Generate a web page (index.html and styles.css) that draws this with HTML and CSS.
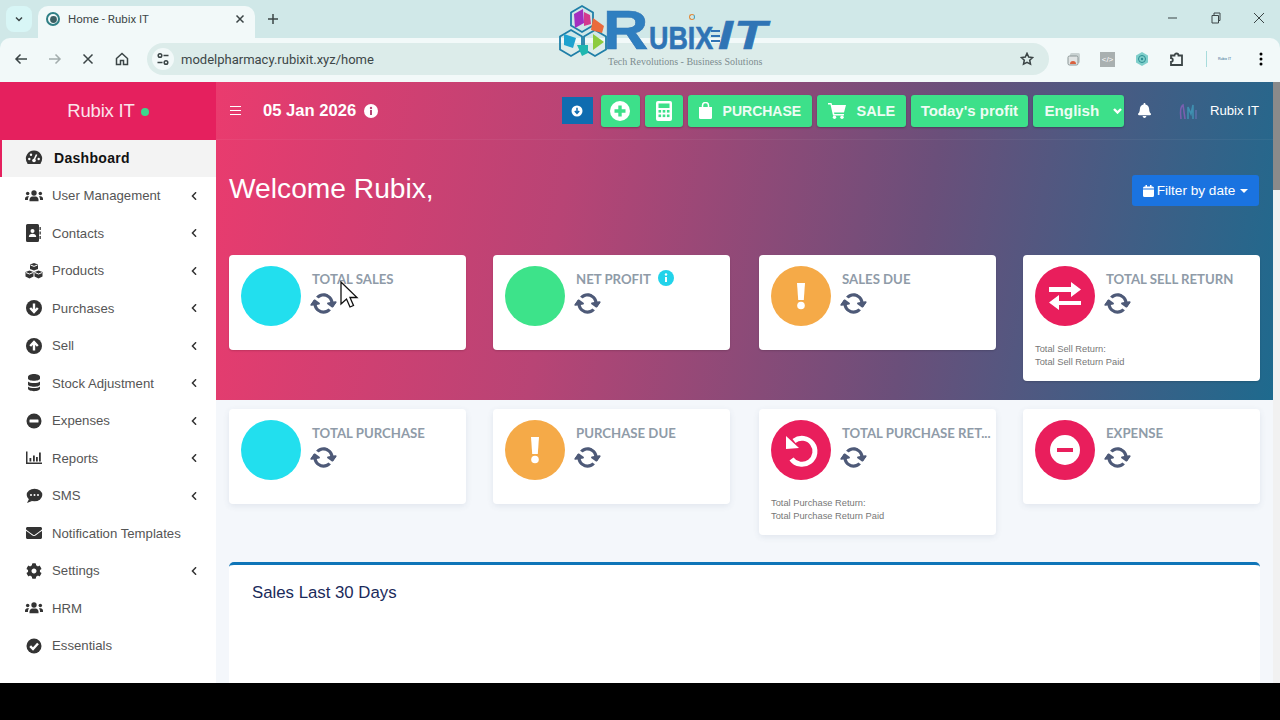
FILE: index.html
```html
<!DOCTYPE html>
<html lang="en">
<head>
  <meta charset="UTF-8">
  <title>Home - Rubix IT</title>
  <link rel="stylesheet" href="styles.css">
</head>

<body>
  <svg class="defs" width="0" height="0">
    <symbol id="i-sync" viewBox="0 0 512 512"><path d="M370.72 133.28C339.458 104.008 298.888 87.962 255.848 88c-77.458.068-144.328 53.178-162.791 126.85-1.344 5.363-6.122 9.15-11.651 9.15H24.103c-7.498 0-13.194-6.807-11.807-14.176C33.933 94.924 134.813 8 256 8c66.448 0 126.791 26.136 171.315 68.685L463.03 40.97C478.149 25.851 504 36.559 504 57.941V192c0 13.255-10.745 24-24 24H345.941c-21.382 0-32.09-25.851-16.971-40.971l41.75-41.749zM32 296h134.059c21.382 0 32.09 25.851 16.971 40.971l-41.75 41.75c31.262 29.273 71.835 45.319 114.876 45.28 77.418-.07 144.315-53.144 162.787-126.849 1.344-5.363 6.122-9.15 11.651-9.15h57.304c7.498 0 13.194 6.807 11.807 14.176C478.067 417.076 377.187 504 256 504c-66.448 0-126.791-26.136-171.315-68.685L48.97 471.03C33.851 486.149 8 475.441 8 454.059V320c0-13.255 10.745-24 24-24z"/></symbol>
    <symbol id="i-chev" viewBox="0 0 320 512"><path d="M34.52 239.03L228.87 44.69c9.37-9.37 24.57-9.37 33.94 0l22.67 22.67c9.36 9.36 9.37 24.52.04 33.9L131.49 256l154.02 154.75c9.34 9.38 9.32 24.54-.04 33.9l-22.67 22.67c-9.37 9.37-24.57 9.37-33.94 0L34.52 272.97c-9.37-9.37-9.37-24.57 0-33.94z"/></symbol>
    <symbol id="i-users" viewBox="0 0 640 512"><circle cx="320" cy="150" r="95"/><circle cx="95" cy="170" r="62"/><circle cx="545" cy="170" r="62"/><path d="M160 440v-50c0-70 50-120 100-120h120c50 0 100 50 100 120v50z"/><path d="M0 400v-50c0-50 40-85 85-85h60c-25 30-40 65-40 135zM640 400v-50c0-50-40-85-85-85h-60c25 30 40 65 40 135z"/></symbol>
    <symbol id="i-cog" viewBox="0 0 512 512"><path d="M487.4 315.7l-42.6-24.6c4.3-23.2 4.3-47 0-70.2l42.6-24.6c4.9-2.8 7.1-8.6 5.5-14-11.1-35.6-30-67.8-54.7-94.6-3.8-4.1-10-5.1-14.8-2.3L380.8 110c-17.9-15.4-38.5-27.3-60.8-35.1V25.8c0-5.6-3.9-10.5-9.4-11.7-36.7-8.2-74.3-7.8-109.2 0-5.5 1.2-9.4 6.1-9.4 11.7V75c-22.2 7.9-42.8 19.8-60.8 35.1L88.7 85.5c-4.9-2.8-11-1.9-14.8 2.3-24.7 26.7-43.6 58.9-54.7 94.6-1.7 5.4.6 11.2 5.5 14L67.3 221c-4.3 23.2-4.3 47 0 70.2l-42.6 24.6c-4.9 2.8-7.1 8.6-5.5 14 11.1 35.6 30 67.8 54.7 94.6 3.8 4.1 10 5.1 14.8 2.3l42.6-24.6c17.9 15.4 38.5 27.3 60.8 35.1v49.2c0 5.6 3.9 10.5 9.4 11.7 36.7 8.2 74.3 7.8 109.2 0 5.5-1.2 9.4-6.1 9.4-11.7v-49.2c22.2-7.9 42.8-19.8 60.8-35.1l42.6 24.6c4.9 2.8 11 1.9 14.8-2.3 24.7-26.7 43.6-58.9 54.7-94.6 1.5-5.5-.7-11.3-5.6-14.1zM256 336c-44.1 0-80-35.9-80-80s35.9-80 80-80 80 35.9 80 80-35.9 80-80 80z"/></symbol>
    <symbol id="i-mail" viewBox="0 0 512 512"><path d="M502.3 190.8c3.9-3.1 9.7-.2 9.7 4.7V400c0 26.5-21.5 48-48 48H48c-26.5 0-48-21.5-48-48V195.6c0-5 5.7-7.8 9.7-4.7 22.4 17.4 52.1 39.5 154.1 113.6 21.1 15.4 56.7 47.8 92.2 47.6 35.7.3 72-32.8 92.3-47.6 102-74.1 131.6-96.3 154-113.7zM256 320c23.2.4 56.6-29.2 73.4-41.4 132.7-96.3 142.8-104.7 173.4-128.7 5.8-4.5 9.2-11.5 9.2-18.9v-19c0-26.5-21.5-48-48-48H48C21.5 64 0 85.5 0 112v19c0 7.4 3.4 14.3 9.2 18.9 30.6 23.9 40.7 32.4 173.4 128.7 16.8 12.2 50.2 41.8 73.4 41.4z"/></symbol>
    <symbol id="i-bell" viewBox="0 0 448 512"><path d="M224 512c35.32 0 63.97-28.65 63.97-64H160.03c0 35.35 28.65 64 63.97 64zm215.39-149.71c-19.32-20.76-55.47-51.99-55.47-154.29 0-77.7-54.48-139.9-127.94-155.16V32c0-17.67-14.32-32-31.98-32s-31.98 14.33-31.98 32v20.84C118.56 68.1 64.08 130.3 64.08 208c0 102.3-36.15 133.53-55.47 154.29-6 6.45-8.66 14.16-8.61 21.71.11 16.4 12.98 32 32.1 32h383.8c19.12 0 32-15.6 32.1-32 .05-7.55-2.61-15.27-8.61-21.71z"/></symbol>
    <symbol id="i-bang" viewBox="0 0 60 60"><path d="M26 17h8l-1.200 17h-5.600z" fill="#fff"/><circle cx="30" cy="39.500" r="3.800" fill="#fff"/></symbol>
  </svg>

  <div class="browser">
    <div class="tabstrip">
      <div class="tab-list">
        <svg width="10" height="10" viewBox="0 0 10 10"><path d="M2 3.500l3 3 3-3" class="line dark"/></svg>
      </div>
      <div class="tab">
        <svg width="16" height="16" viewBox="0 0 16 16"><circle cx="8" cy="8" r="6" class="line teal"/><circle cx="8.500" cy="8.500" r="3.400" fill="#3c5f63"/></svg>
        <span class="tab-title">Home - Rubix IT</span>
        <svg class="tab-close" width="10" height="10" viewBox="0 0 10 10"><path d="M1.500 1.500l7 7M8.500 1.500l-7 7" class="line dark"/></svg>
      </div>
      <svg class="tab-new" width="12" height="12" viewBox="0 0 12 12"><path d="M6 1v10M1 6h10" class="line dark"/></svg>
      <div class="win-controls">
        <svg width="12" height="12" viewBox="0 0 12 12"><path d="M1 6h9" class="line thin"/></svg>
        <svg width="12" height="12" viewBox="0 0 12 12"><path d="M2 3.500h6.500V11H2zM4 3.500V1h6v7.500H8.500" class="line thin"/></svg>
        <svg width="12" height="12" viewBox="0 0 12 12"><path d="M1 1l10 10M11 1L1 11" class="line thin"/></svg>
      </div>
    </div>
    <div class="toolbar">
      <svg class="tool" width="14" height="14" viewBox="0 0 14 14"><path d="M13 7H2M6.500 2.500L2 7l4.500 4.500" class="line dark"/></svg>
      <svg class="tool" width="14" height="14" viewBox="0 0 14 14"><path d="M1 7h11M7.500 2.500L12 7l-4.500 4.500" class="line faint"/></svg>
      <svg class="tool" width="14" height="14" viewBox="0 0 14 14"><path d="M2.500 2.500l9 9M11.500 2.500l-9 9" class="line dark"/></svg>
      <svg class="tool" width="14" height="14" viewBox="0 0 14 14"><path d="M1.500 6.500L7 1.500l5.500 5v6H8.500V8.500h-3v4h-4z" class="line dark"/></svg>
      <div class="address">
        <div class="site-info">
          <svg width="14" height="14" viewBox="0 0 14 14"><circle cx="4" cy="3.500" r="1.800" class="line dark"/><path d="M7.500 3.500h5M1.500 10.500h5" class="line dark"/><circle cx="10" cy="10.500" r="1.800" class="line dark"/></svg>
        </div>
        <span class="url">modelpharmacy.rubixit.xyz/home</span>
        <svg class="star" width="14" height="14" viewBox="0 0 14 14"><path d="M7 1.300l1.700 3.700 4 .5-3 2.700.8 4L7 10.300l-3.500 1.900.8-4-3-2.700 4-.5z" class="line dark"/></svg>
      </div>
      <div class="ext-icons">
        <svg width="14" height="14" viewBox="0 0 14 14"><rect x="3" y="1" width="10" height="10" rx="1.500" fill="#c9d2d2"/><rect x="1" y="4" width="10" height="9" rx="1.500" fill="#e0e4e4" stroke="#8b9696"/><path d="M3 12a3 3 0 016 0z" fill="#d9613f"/></svg>
        <div class="ext-code">&lt;/&gt;</div>
        <svg width="16" height="16" viewBox="0 0 16 16"><path d="M8 1l6 3.500v7L8 15l-6-3.500v-7z" fill="#7fcfcb"/><circle cx="8" cy="8" r="3.500" fill="none" stroke="#2b8e93"/><circle cx="8" cy="8" r="1.200" fill="#2b8e93"/></svg>
        <svg width="15" height="15" viewBox="0 0 15 15"><path d="M2 3.500h3.500a2 2 0 014 0H13v9.500H2V9.800a1.800 1.800 0 000-3.600z" class="line dark wide"/></svg>
        <div class="ext-sep"></div>
        <span class="ext-name">Rubix IT</span>
        <svg class="ext-menu" width="4" height="14" viewBox="0 0 4 14"><circle cx="2" cy="2" r="1.500"/><circle cx="2" cy="7" r="1.500"/><circle cx="2" cy="12" r="1.500"/></svg>
      </div>
    </div>
  </div>

  <div class="brand-logo">
    <svg class="brand-mark" width="54" height="54" viewBox="0 0 54 54">
      <g fill="none" stroke="#1f7fa8" stroke-width="1.800">
        <path d="M26 2l11 6.500v13L26 28l-11-6.500v-13z"/>
        <path d="M15 26l11 6.500v13L15 52 4 45.500v-13z"/>
        <path d="M39 26l11 6.500v13L39 52l-11-6.500v-13z"/>
      </g>
      <path d="M18 10l9-5 1 14-9 5z" fill="#a32fc0"/>
      <path d="M28 8l6 3 1 9-7 2z" fill="#d43a8e"/>
      <path d="M37 14l11 8-2 7-11-3z" fill="#ea6a3c"/>
      <path d="M8 30l12 4-3 10-9-3z" fill="#1fa2cf"/>
      <path d="M37 30l11 8-11 8z" fill="#8ccb3f"/>
      <path d="M21 41l11 0 0 8-6 3z" fill="#1fb7b0"/>
    </svg>
    <div class="brand-text">
      <div class="brand-name"><span class="brand-r">R</span><span class="brand-ubix">UBIX</span><span class="brand-speed"><i></i><i></i><i></i></span><span class="brand-it">IT</span></div>
      <div class="brand-tag">Tech Revolutions - Business Solutions</div>
    </div>
    <span class="brand-dot"></span>
  </div>

  <div class="app">
    <aside class="sidebar">
      <div class="side-head">Rubix IT<span class="online"></span></div>
      <nav class="side-nav">
        <a class="nav-item active">
          <svg class="nav-icon" viewBox="0 0 18 18"><path d="M9 1.500a8 8 0 00-7 12l.6 1.500h12.800l.6-1.500a8 8 0 00-7-12z"/><path d="M9 11l2.600-5.500" stroke="#fff" stroke-width="1.600"/><circle cx="9" cy="11.500" r="1.800" fill="#fff"/><circle cx="4.300" cy="10" r="1.200" fill="#fff"/><circle cx="6" cy="5.800" r="1.200" fill="#fff"/><circle cx="13.700" cy="10" r="1.200" fill="#fff"/></svg>
          <span>Dashboard</span>
        </a>
        <a class="nav-item">
          <svg class="nav-icon" viewBox="0 0 18 18"><use href="#i-users" width="18" height="14.400" y="1.800"/></svg>
          <span>User Management</span>
          <svg class="nav-chev"><use href="#i-chev"/></svg>
        </a>
        <a class="nav-item">
          <svg class="nav-icon" viewBox="0 0 18 18"><path d="M1 1.500a1.500 1.500 0 011.500-1.500h10A1.500 1.500 0 0114 1.500v15a1.500 1.500 0 01-1.500 1.500h-10A1.500 1.500 0 011 16.500z"/><rect x="14.500" y="3" width="1.300" height="3"/><rect x="14.500" y="7.500" width="1.300" height="3"/><rect x="14.500" y="12" width="1.300" height="3"/><circle cx="7.500" cy="7" r="2" fill="#fff"/><path d="M3.800 13c0-2.300 1.700-3.300 3.700-3.300s3.700 1 3.700 3.300z" fill="#fff"/></svg>
          <span>Contacts</span>
          <svg class="nav-chev"><use href="#i-chev"/></svg>
        </a>
        <a class="nav-item">
          <svg class="nav-icon" viewBox="0 0 18 18"><path d="M9 1l4 1.600v4.300L9 8.500 5 6.900V2.600z"/><path d="M4.500 8.500l4 1.600v4.500l-4 1.800-4-1.800v-4.500z"/><path d="M13.500 8.500l4 1.600v4.500l-4 1.800-4-1.800v-4.500z"/><path d="M5.500 3l3.500 1.400L12.500 3M1 10.600l3.500 1.400L8 10.600M10 10.600l3.500 1.400 3.500-1.400" class="line white"/></svg>
          <span>Products</span>
          <svg class="nav-chev"><use href="#i-chev"/></svg>
        </a>
        <a class="nav-item">
          <svg class="nav-icon" viewBox="0 0 18 18"><circle cx="9" cy="9" r="8"/><path d="M9 4.500v8M5.200 9L9 13l3.800-4" class="line white bold"/></svg>
          <span>Purchases</span>
          <svg class="nav-chev"><use href="#i-chev"/></svg>
        </a>
        <a class="nav-item">
          <svg class="nav-icon" viewBox="0 0 18 18"><circle cx="9" cy="9" r="8"/><path d="M9 13.500v-8M5.200 9L9 5l3.800 4" class="line white bold"/></svg>
          <span>Sell</span>
          <svg class="nav-chev"><use href="#i-chev"/></svg>
        </a>
        <a class="nav-item">
          <svg class="nav-icon" viewBox="0 0 18 18"><path d="M3 3c0-4 12-4 12 0v1.500c0 3-12 3-12 0z"/><path d="M3 7.500c2 2 10 2 12 0v3c0 3-12 3-12 0z"/><path d="M3 12.500c2 2 10 2 12 0v2c0 3.500-12 3.500-12 0z"/></svg>
          <span>Stock Adjustment</span>
          <svg class="nav-chev"><use href="#i-chev"/></svg>
        </a>
        <a class="nav-item">
          <svg class="nav-icon" viewBox="0 0 18 18"><circle cx="9" cy="9" r="7.500"/><rect x="4.500" y="7.500" width="9" height="3" rx=".5" fill="#fff"/></svg>
          <span>Expenses</span>
          <svg class="nav-chev"><use href="#i-chev"/></svg>
        </a>
        <a class="nav-item">
          <svg class="nav-icon" viewBox="0 0 18 18"><path d="M1 2.500h1.500v11H17V15H1z"/><rect x="4.500" y="9" width="1.800" height="3.500"/><rect x="8" y="6.500" width="1.800" height="6"/><rect x="11" y="8" width="1.800" height="4.500"/><rect x="14" y="3.500" width="1.800" height="9"/></svg>
          <span>Reports</span>
          <svg class="nav-chev"><use href="#i-chev"/></svg>
        </a>
        <a class="nav-item">
          <svg class="nav-icon" viewBox="0 0 18 18"><ellipse cx="9.500" cy="8" rx="7.800" ry="6.300"/><path d="M4 12l-2 4 5-2z"/><circle cx="6" cy="8" r="1" fill="#fff"/><circle cx="9.500" cy="8" r="1" fill="#fff"/><circle cx="13" cy="8" r="1" fill="#fff"/></svg>
          <span>SMS</span>
          <svg class="nav-chev"><use href="#i-chev"/></svg>
        </a>
        <a class="nav-item">
          <svg class="nav-icon" viewBox="0 0 18 18"><use href="#i-mail" width="16" height="16" x="1" y="1"/></svg>
          <span>Notification Templates</span>
        </a>
        <a class="nav-item">
          <svg class="nav-icon" viewBox="0 0 18 18"><use href="#i-cog" width="16" height="16" x="1" y="1"/></svg>
          <span>Settings</span>
          <svg class="nav-chev"><use href="#i-chev"/></svg>
        </a>
        <a class="nav-item">
          <svg class="nav-icon" viewBox="0 0 18 18"><use href="#i-users" width="18" height="14.400" y="1.800"/></svg>
          <span>HRM</span>
        </a>
        <a class="nav-item">
          <svg class="nav-icon" viewBox="0 0 18 18"><circle cx="9" cy="9" r="7.500"/><path d="M5.200 9.200L8 12l5-5.500" class="line white bold"/></svg>
          <span>Essentials</span>
        </a>
      </nav>
    </aside>

    <main class="main">
      <section class="hero">
        <header class="topbar">
          <div class="hamburger"><i></i><i></i><i></i></div>
          <strong class="today">05 Jan 2026</strong>
          <svg class="today-info" viewBox="0 0 14 14"><circle cx="7" cy="7" r="7" fill="#fff"/><rect x="6" y="6" width="2" height="5" fill="#b84475"/><circle cx="7" cy="4" r="1.200" fill="#b84475"/></svg>
          <div class="top-actions">
            <button class="btn-blue"><svg width="12" height="12" viewBox="0 0 12 12"><circle cx="6" cy="6" r="5.500" fill="#fff"/><path d="M6 2.800v5M3.800 6L6 8.300 8.200 6" class="line blue"/></svg></button>
            <button class="btn-green btn-plus"><svg width="20" height="20" viewBox="0 0 20 20"><circle cx="10" cy="10" r="10" fill="#fff"/><path d="M10 4.500v11M4.500 10h11" stroke="#3de08a" stroke-width="3.400"/></svg></button>
            <button class="btn-green btn-calc"><svg width="16" height="20" viewBox="0 0 16 20"><rect width="16" height="20" rx="2" fill="#fff"/><rect x="2.500" y="2.500" width="11" height="4.500" fill="#3de08a"/><g fill="#3de08a"><rect x="2.500" y="9" width="2.600" height="2.600"/><rect x="6.700" y="9" width="2.600" height="2.600"/><rect x="10.900" y="9" width="2.600" height="2.600"/><rect x="2.500" y="13.500" width="2.600" height="2.600"/><rect x="6.700" y="13.500" width="2.600" height="2.600"/><rect x="10.900" y="13.500" width="2.600" height="2.600"/></g></svg></button>
            <button class="btn-green btn-purchase"><svg width="13" height="17" viewBox="0 0 13 17"><path d="M0 5h13v10.500a1.500 1.500 0 01-1.500 1.500h-10A1.500 1.500 0 010 15.500z" fill="#fff"/><path d="M3.500 7V3.500a3 3 0 016 0V7" fill="none" stroke="#fff" stroke-width="1.500"/></svg>PURCHASE</button>
            <button class="btn-green btn-sale"><svg width="18" height="16" viewBox="0 0 18 16"><path d="M0 0h3.500l.6 2H18l-2 7.500H6l.4 1.500H16v1.500H5L2.500 1.500H0z" fill="#fff"/><circle cx="6.500" cy="14.300" r="1.700" fill="#fff"/><circle cx="14" cy="14.300" r="1.700" fill="#fff"/></svg>SALE</button>
            <button class="btn-green btn-profit">Today's profit</button>
            <button class="btn-green btn-lang">English<svg width="9" height="6" viewBox="0 0 9 6"><path d="M1 1l3.500 3.500L8 1" class="line white bold"/></svg></button>
            <svg class="bell"><use href="#i-bell"/></svg>
            <svg class="avatar" width="22" height="20" viewBox="0 0 22 20"><path d="M3 18c-1-8 0-13 2-14l2 14" fill="none" stroke="#7a5fb0" stroke-width="1.600"/><path d="M10 18V6l3 7 2-9v14" fill="none" stroke="#3f8fb0" stroke-width="1.600"/><path d="M18 18V9" stroke="#5b6ea8" stroke-width="1.600"/></svg>
            <span class="user-name">Rubix IT</span>
          </div>
        </header>

        <div class="welcome">
          <h1>Welcome Rubix,</h1>
          <button class="btn-filter"><svg width="11" height="12" viewBox="0 0 11 12"><path d="M0 4.500h11v6a1.500 1.500 0 01-1.500 1.500h-8A1.500 1.500 0 010 10.500zM0 3.500V3a1.500 1.500 0 011.500-1.500H2.500V0H4v1.500h3V0h1.500v1.500h1A1.500 1.500 0 0111 3v.5z" fill="#fff"/></svg>Filter by date<span class="caret"></span></button>
        </div>

        <div class="cards">
          <div class="card">
            <div class="card-top">
              <div class="disc cyan"></div>
              <div class="card-body"><div class="card-title">TOTAL SALES</div><svg class="sync"><use href="#i-sync"/></svg></div>
            </div>
          </div>
          <div class="card">
            <div class="card-top">
              <div class="disc green"></div>
              <div class="card-body">
                <div class="card-title">NET PROFIT<svg class="title-info" viewBox="0 0 16 16"><circle cx="8" cy="8" r="8" fill="#22d3ea"/><rect x="7" y="7" width="2" height="5" fill="#fff"/><circle cx="8" cy="4.500" r="1.200" fill="#fff"/></svg></div>
                <svg class="sync"><use href="#i-sync"/></svg>
              </div>
            </div>
          </div>
          <div class="card">
            <div class="card-top">
              <div class="disc orange"><svg class="disc-icon"><use href="#i-bang"/></svg></div>
              <div class="card-body"><div class="card-title">SALES DUE</div><svg class="sync"><use href="#i-sync"/></svg></div>
            </div>
          </div>
          <div class="card">
            <div class="card-top">
              <div class="disc pink">
                <svg class="disc-icon" viewBox="0 0 60 60"><path d="M14 21h22v-5l10 7.500-10 7.500v-5H14zM46 35v4H24v5l-10-7.500L24 29v6z" fill="#fff"/></svg>
              </div>
              <div class="card-body"><div class="card-title">TOTAL SELL RETURN</div><svg class="sync"><use href="#i-sync"/></svg></div>
            </div>
            <div class="card-note">Total Sell Return:<br>Total Sell Return Paid</div>
          </div>
        </div>
      </section>

      <section class="cards cards-light">
        <div class="card">
          <div class="card-top">
            <div class="disc cyan"></div>
            <div class="card-body"><div class="card-title">TOTAL PURCHASE</div><svg class="sync"><use href="#i-sync"/></svg></div>
          </div>
        </div>
        <div class="card">
          <div class="card-top">
            <div class="disc orange"><svg class="disc-icon"><use href="#i-bang"/></svg></div>
            <div class="card-body"><div class="card-title">PURCHASE DUE</div><svg class="sync"><use href="#i-sync"/></svg></div>
          </div>
        </div>
        <div class="card">
          <div class="card-top">
            <div class="disc pink">
              <svg class="disc-icon" viewBox="0 0 60 60"><path d="M23 21a13 13 0 11-2.500 18" fill="none" stroke="#fff" stroke-width="5"/><path d="M15 16l0 13 13-1z" fill="#fff"/></svg>
            </div>
            <div class="card-body"><div class="card-title">TOTAL PURCHASE RET...</div><svg class="sync"><use href="#i-sync"/></svg></div>
          </div>
          <div class="card-note">Total Purchase Return:<br>Total Purchase Return Paid</div>
        </div>
        <div class="card">
          <div class="card-top">
            <div class="disc pink">
              <svg class="disc-icon" viewBox="0 0 60 60"><circle cx="30" cy="30" r="15" fill="#fff"/><rect x="22" y="28" width="16" height="4" fill="#e91e5c"/></svg>
            </div>
            <div class="card-body"><div class="card-title">EXPENSE</div><svg class="sync"><use href="#i-sync"/></svg></div>
          </div>
        </div>
      </section>

      <section class="chart-box">
        <h3>Sales Last 30 Days</h3>
      </section>
    </main>

    <div class="scrollbar"><div class="scroll-thumb"></div></div>

    <svg class="cursor" width="20" height="30" viewBox="0 0 20 30"><path d="M1 1v22l5.500-5 3.500 8 3.500-1.500-3.500-8H17z" fill="#fff" stroke="#111" stroke-width="1.300"/></svg>
  </div>

  <div class="video-bar"></div>
</body>
</html>
```

FILE: styles.css
```css
*
{
  box-sizing: border-box;
}
html, body
{
  margin: 0;
  height: 720px;
  overflow: hidden;
}
body
{
  position: relative;
  display: flex;
  flex-direction: column;
  font-family: "Liberation Sans", Arial, sans-serif;
  background-color: #000;
}
button
{
  font-family: inherit;
  border: none;
  cursor: pointer;
}
.defs
{
  position: absolute;
}
.line
{
  fill: none;
  stroke: #444;
  stroke-width: 1.500;
}
.line.dark { stroke: #3b4546; }
.line.faint { stroke: #a3adad; }
.line.teal { stroke: #2f7f85; stroke-width: 2; }
.line.thin { stroke: #3b4546; stroke-width: 1; }
.line.wide { stroke-width: 1.800; }
.line.white { stroke: #fff; stroke-width: 1; }
.line.bold { stroke-width: 2.400; }
.line.blue { stroke: #0f6cb0; }

/* browser chrome */
.browser
{
  flex: 0 0 82px;
  display: flex;
  flex-direction: column;
  background-color: #d0e8e8;
}
.tabstrip
{
  flex: 0 0 38px;
  display: flex;
  align-items: flex-start;
  padding: 6px 0 0 6px;
}
.tab-list
{
  width: 26px;
  height: 26px;
  display: flex;
  align-items: center;
  justify-content: center;
  border-radius: 8px;
  background-color: #d8f6f6;
}
.tab
{
  width: 217px;
  height: 32px;
  margin-left: 6px;
  padding: 0 10px 6px 7px;
  display: flex;
  align-items: center;
  border-radius: 10px 10px 0 0;
  background-color: #f2f9f9;
}
.tab-title
{
  margin-left: 7px;
  font-family: Roboto, sans-serif;
  font-size: 11.500px;
  color: #3d4748;
}
.tab-close
{
  margin-left: auto;
}
.tab-new
{
  margin: 7px 0 0 12px;
}
.win-controls
{
  margin: 6px 15px 0 auto;
  display: flex;
  gap: 31px;
}
.toolbar
{
  flex: 0 0 44px;
  display: flex;
  align-items: center;
  padding: 0 0 2px 14px;
  border-radius: 10px 10px 0 0;
  background-color: #f2f9f9;
}
.tool
{
  margin-right: 19.500px;
}
.address
{
  width: 902px;
  height: 32px;
  margin-left: -1px;
  padding-left: 5px;
  display: flex;
  align-items: center;
  border-radius: 16px;
  background-color: #dcecea;
}
.site-info
{
  width: 22px;
  height: 22px;
  display: flex;
  align-items: center;
  justify-content: center;
  border-radius: 50%;
  background-color: #f2f9f9;
}
.url
{
  margin-left: 7px;
  font-family: Roboto, sans-serif;
  font-size: 13px;
  color: #3d4748;
}
.star
{
  margin: 0 15px 0 auto;
}
.ext-icons
{
  margin-left: 18px;
  display: flex;
  align-items: center;
  gap: 19px;
}
.ext-code
{
  width: 15px;
  height: 15px;
  font-size: 8px;
  line-height: 15px;
  text-align: center;
  color: #fff;
  background-color: #a9b0b0;
}
.ext-sep
{
  width: 1px;
  height: 16px;
  margin-left: 3px;
  background-color: #a8dcdc;
}
.ext-name
{
  width: 18px;
  margin-left: -8px;
  font-size: 3.500px;
  white-space: nowrap;
  color: #2f5f8f;
}
.ext-menu
{
  margin-left: 4px;
}

/* logo over the browser chrome */
.brand-logo
{
  position: absolute;
  left: 556px;
  top: 4px;
  display: flex;
}
.brand-text
{
  margin-left: -7px;
}
.brand-name
{
  height: 52px;
  display: flex;
  align-items: baseline;
  font-weight: bold;
  color: #2f74b5;
  -webkit-text-stroke: .6px #2f74b5;
}
.brand-r
{
  width: 46px;
  font-size: 56px;
  line-height: 52px;
  color: #2f7fc0;
  transform: scaleX(1.120);
  transform-origin: left;
}
.brand-ubix
{
  width: 69px;
  font-size: 32px;
  transform: scaleX(.840);
  transform-origin: left;
}
.brand-speed
{
  width: 0;
  align-self: flex-start;
  padding-top: 26px;
}
.brand-speed i
{
  display: block;
  width: 9px;
  height: 2px;
  margin: 0 0 3px -7px;
  background-color: #2f74b5;
}
.brand-it
{
  font-size: 41px;
  font-style: italic;
  letter-spacing: 1px;
  transform: scaleX(1.300);
  transform-origin: left;
}
.brand-tag
{
  margin-top: 0;
  margin-left: 5px;
  font-family: "Liberation Serif", serif;
  font-size: 10px;
  line-height: 11px;
  white-space: nowrap;
  color: #7c8c90;
}
.brand-dot
{
  position: absolute;
  left: 133px;
  top: 10px;
  width: 6px;
  height: 6px;
  border: 1.500px solid #e08a3c;
  border-right-color: #3f9fc0;
  border-radius: 50%;
}

/* app */
.app
{
  position: relative;
  flex: 0 0 601px;
  display: flex;
  overflow: hidden;
  background-color: #f4f7fb;
}
.sidebar
{
  flex: 0 0 216px;
  display: flex;
  flex-direction: column;
  background-color: #fff;
}
.side-head
{
  flex: 0 0 57.500px;
  display: flex;
  align-items: center;
  justify-content: center;
  font-size: 18.500px;
  letter-spacing: -.2px;
  color: #fbe3ea;
  background-color: #e5205e;
}
.online
{
  width: 8px;
  height: 8px;
  margin: 3px 0 0 6px;
  border-radius: 50%;
  background-color: #3dd68c;
}
.side-nav
{
  display: flex;
  flex-direction: column;
}
.nav-item
{
  height: 37.500px;
  padding-left: 25px;
  display: flex;
  align-items: center;
  font-size: 13.200px;
  color: #555;
}
.nav-item.active
{
  padding-left: 23px;
  font-size: 14px;
  font-weight: bold;
  letter-spacing: .3px;
  color: #111;
  background-color: #f3f3f3;
  border-left: 2px solid #e5205e;
}
.nav-item.active .nav-icon
{
  margin-right: 11px;
}
.nav-icon
{
  flex: 0 0 18px;
  width: 18px;
  height: 18px;
  margin-right: 9px;
  fill: #333;
}
.nav-chev
{
  width: 6px;
  height: 10px;
  margin: 0 19px 0 auto;
  fill: #333;
}

.main
{
  flex: 1;
  min-width: 0;
  display: flex;
  flex-direction: column;
}
.hero
{
  height: 318px;
  background-image: linear-gradient(100deg, #ea3b6e 0%, #b84475 33%, #6a4f7a 66%, #1e6a8e 100%);
}
.topbar
{
  height: 58px;
  padding: 0 14px;
  display: flex;
  align-items: center;
  border-bottom: 1px solid rgba(255, 255, 255, .05);
}
.hamburger
{
  width: 11px;
  margin-right: 22px;
}
.hamburger i
{
  display: block;
  height: 1.500px;
  margin: 2.500px 0;
  background-color: #fff;
}
.today
{
  font-size: 16.600px;
  color: #fff;
}
.today-info
{
  width: 14px;
  height: 14px;
  margin-left: 8px;
}
.top-actions
{
  margin-left: auto;
  display: flex;
  align-items: center;
  gap: 5px;
}
.btn-blue
{
  width: 31px;
  height: 27px;
  margin-right: 3px;
  padding: 0;
  display: flex;
  align-items: center;
  justify-content: center;
  background-color: #0f6cb0;
}
.btn-green
{
  height: 32px;
  padding: 0;
  display: flex;
  align-items: center;
  justify-content: center;
  font-size: 15px;
  font-weight: bold;
  color: #eefcf4;
  border-radius: 3px;
  background-color: #3de08a;
  box-shadow: 0 1px 2px rgba(0, 0, 0, .25);
}
.btn-plus { width: 39px; }
.btn-calc { width: 38px; }
.btn-purchase { width: 124px; gap: 11px; font-size: 14px; }
.btn-sale { width: 89px; gap: 11px; font-size: 14.500px; }
.btn-profit { width: 117px; }
.btn-lang { width: 91px; font-size: 15.200px; gap: 14px; padding-left: 10px; }
.bell
{
  width: 13px;
  height: 15px;
  margin-left: 9px;
  fill: #fff;
}
.avatar
{
  margin-left: 22px;
}
.user-name
{
  margin-left: 5px;
  font-size: 13.200px;
  color: #fff;
}
.welcome
{
  height: 115px;
  padding: 0 14px 0 13px;
  display: flex;
  align-items: flex-start;
  justify-content: space-between;
}
.welcome h1
{
  margin: 31px 0 0;
  font-size: 28.200px;
  font-weight: normal;
  line-height: 35px;
  color: #fff;
}
.btn-filter
{
  width: 127px;
  height: 31px;
  margin-top: 35px;
  display: flex;
  align-items: center;
  justify-content: center;
  gap: 3px;
  font-size: 13.600px;
  color: #fff;
  border-radius: 3px;
  background-color: #1a73e0;
}
.caret
{
  margin-left: 2px;
  border: 4px solid transparent;
  border-top-color: #fff;
  border-bottom: none;
}
.cards
{
  padding: 0 13px;
  display: grid;
  grid-template-columns: 264px 266px 264px 237px;
  align-items: start;
}
.cards-light
{
  margin-top: 9px;
}
.card
{
  width: 237px;
  padding: 11px 3px 24px 12px;
  border-radius: 4px;
  background-color: #fff;
  box-shadow: 0 1px 2px rgba(0, 0, 0, .15);
}
.cards-light .card
{
  box-shadow: 0 2px 6px rgba(60, 80, 120, .1);
}
.card-top
{
  display: flex;
  align-items: flex-start;
}
.disc
{
  flex: 0 0 60px;
  height: 60px;
  border-radius: 50%;
}
.disc-icon
{
  display: block;
  width: 60px;
  height: 60px;
}
.cyan { background-color: #22dfee; }
.green { background-color: #3de38a; }
.orange { background-color: #f5aa48; }
.pink { background-color: #e91e5c; }
.card-body
{
  flex: 1;
  min-width: 0;
  padding-left: 11px;
}
.card-title
{
  margin-top: 4px;
  height: 18px;
  font-family: Lato, sans-serif;
  font-size: 13.200px;
  font-weight: 700;
  line-height: 18px;
  color: #8f9ba8;
  white-space: nowrap;
}
.title-info
{
  width: 16px;
  height: 16px;
  margin-left: 7px;
  vertical-align: -2px;
}
/* the value is still loading: the icon is caught mid-spin */
.sync
{
  display: block;
  width: 21px;
  height: 21px;
  margin: 5px 0 0 1px;
  fill: #4e5a78;
  transform: rotate(35deg);
}
.card-note
{
  margin-top: 17px;
  margin-bottom: -12px;
  font-size: 9.300px;
  line-height: 13px;
  color: #777;
}
.chart-box
{
  flex: 1;
  margin: 27px 13px 0;
  padding: 18px 23px;
  border-top: 3px solid #0f75b8;
  border-radius: 5px 5px 0 0;
  background-color: #fff;
}
.chart-box h3
{
  margin: 0;
  font-size: 16.800px;
  font-weight: normal;
  line-height: 20px;
  color: #1a2a5a;
}
.scrollbar
{
  flex: 0 0 7px;
  background-color: #f1f1f1;
}
.scroll-thumb
{
  height: 108px;
  background-color: #8a8a8a;
}
.cursor
{
  position: absolute;
  left: 340px;
  top: 199px;
}
.video-bar
{
  flex: 1;
  background-color: #000;
}
```
